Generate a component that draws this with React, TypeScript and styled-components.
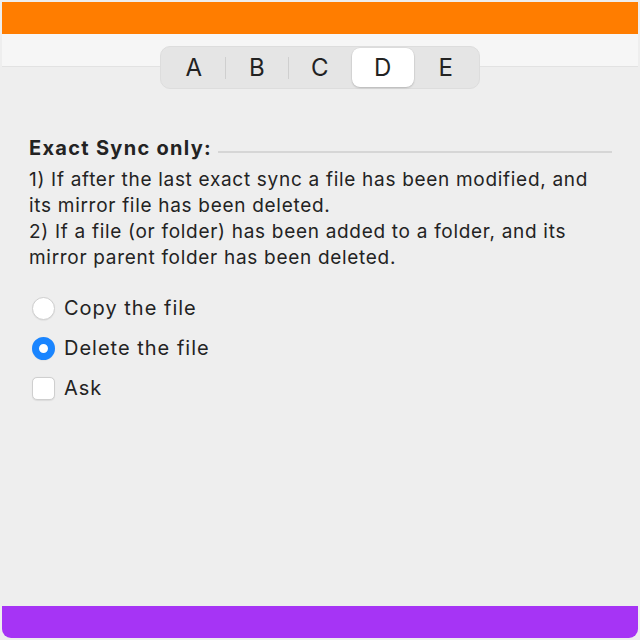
import React, { useState } from 'react'
import styled, { createGlobalStyle } from 'styled-components'

const GlobalStyle = createGlobalStyle`
  html, body {
    margin: 0;
    padding: 0;
    background: #eeeeee;
  }
  body {
    font-family: Inter, 'Noto Sans', sans-serif;
    color: #232323;
  }
`

const tabs = ['A', 'B', 'C', 'D', 'E']

const options = [
  { id: 'copy', label: 'Copy the file', kind: 'radio' },
  { id: 'delete', label: 'Delete the file', kind: 'radio' },
  { id: 'ask', label: 'Ask', kind: 'check' },
]

const App: React.FC = () => {
  const [tab, setTab] = useState(3)
  const [choice, setChoice] = useState('delete')
  const [ask, setAsk] = useState(false)

  return (
    <>
      <GlobalStyle />
      <StyledWindow>
        <TopBar />
        <StyledToolbar>
          <StyledSegments>
            {tabs.map((t, i) => (
              <React.Fragment key={t}>
                {i > 0 && (
                  <StyledDivider faded={i === tab || i - 1 === tab} />
                )}
                <StyledSegment active={i === tab} onClick={() => setTab(i)}>
                  {t}
                </StyledSegment>
              </React.Fragment>
            ))}
          </StyledSegments>
        </StyledToolbar>

        <StyledContent>
          <StyledHeading>
            <StyledHeadingText>Exact Sync only:</StyledHeadingText>
            <StyledRule />
          </StyledHeading>
          <StyledText>
            1) If after the last exact sync a file has been modified, and
            <br />
            its mirror file has been deleted.
            <br />
            2) If a file (or folder) has been added to a folder, and its
            <br />
            mirror parent folder has been deleted.
          </StyledText>

          <StyledOptions>
            {options.map((o) => {
              const checked = o.kind === 'radio' ? choice === o.id : ask
              return (
                <StyledOption
                  key={o.id}
                  onClick={() =>
                    o.kind === 'radio' ? setChoice(o.id) : setAsk(!ask)
                  }
                >
                  {o.kind === 'radio' ? (
                    <StyledRadio checked={checked} />
                  ) : (
                    <StyledCheck checked={checked}>{checked ? '✓' : ''}</StyledCheck>
                  )}
                  {o.label}
                </StyledOption>
              )
            })}
          </StyledOptions>
        </StyledContent>

        <BottomBar />
      </StyledWindow>
    </>
  )
}

const StyledWindow = styled.div`
  margin: 2px;
  width: 636px;
  height: 636px;
  display: flex;
  flex-direction: column;
  background: #eeeeee;
`

const TopBar = styled.div`
  height: 32px;
  background: #ff7d00;
  flex-shrink: 0;
`

const BottomBar = styled.div`
  margin-top: auto;
  height: 32px;
  background: #a634f5;
  border-radius: 0 0 9px 9px;
  flex-shrink: 0;
`

const StyledToolbar = styled.div`
  display: flex;
  justify-content: center;
  padding-top: 12px;
  background: linear-gradient(
    #f6f6f6 0,
    #f6f6f6 32px,
    #e2e2e2 32px,
    #e2e2e2 33px,
    #eeeeee 33px
  );
`

const StyledSegments = styled.div`
  display: flex;
  align-items: center;
  box-sizing: border-box;
  width: 320px;
  height: 43px;
  padding: 0 2px;
  border-radius: 10px;
  background: #e5e5e5;
  border: 1px solid #dddddd;
`

const StyledSegment = styled.div<{ active: boolean }>`
  flex: 1;
  height: 39px;
  display: flex;
  align-items: center;
  justify-content: center;
  font-size: 24px;
  letter-spacing: 0.5px;
  color: #222222;
  border-radius: 8px;
  cursor: default;
  background: ${(p) => (p.active ? '#ffffff' : 'transparent')};
  box-shadow: ${(p) =>
    p.active ? '0 1px 2px rgba(0, 0, 0, 0.18), 0 0 0 0.5px rgba(0,0,0,0.06)' : 'none'};
`

const StyledDivider = styled.div<{ faded: boolean }>`
  width: 1px;
  height: 22px;
  background: ${(p) => (p.faded ? 'transparent' : '#cfcfcf')};
`

const StyledContent = styled.div`
  padding: 46px 27px 0 27px;
`

const StyledHeading = styled.div`
  display: flex;
  align-items: center;
  gap: 6px;
`

const StyledHeadingText = styled.div`
  font-size: 20px;
  font-weight: 700;
  letter-spacing: 1.3px;
  line-height: 26px;
  white-space: nowrap;
`

const StyledRule = styled.div`
  flex: 1;
  height: 2px;
  margin-top: 8px;
  margin-right: -1px;
  background: #d6d6d6;
`

const StyledText = styled.div`
  margin-top: 6px;
  font-size: 19px;
  letter-spacing: 0.7px;
  line-height: 26px;
  color: #232323;
`

const StyledOptions = styled.div`
  margin-top: 23px;
  display: flex;
  flex-direction: column;
  gap: 12px;
`

const StyledOption = styled.label`
  display: flex;
  align-items: center;
  gap: 9px;
  height: 28px;
  font-size: 20px;
  letter-spacing: 1px;
  color: #232323;
  padding-left: 3px;
`

const StyledRadio = styled.span<{ checked: boolean }>`
  box-sizing: border-box;
  width: 23px;
  height: 23px;
  border-radius: 50%;
  flex-shrink: 0;
  background: #ffffff;
  border: ${(p) => (p.checked ? '7px solid #1a85ff' : '1px solid #cfcfcf')};
  box-shadow: 0 0.5px 1px rgba(0, 0, 0, 0.08);
`

const StyledCheck = styled.span<{ checked: boolean }>`
  box-sizing: border-box;
  width: 23px;
  height: 23px;
  border-radius: 5px;
  flex-shrink: 0;
  display: flex;
  align-items: center;
  justify-content: center;
  font-size: 16px;
  color: #ffffff;
  background: ${(p) => (p.checked ? '#1a85ff' : '#ffffff')};
  border: 1px solid ${(p) => (p.checked ? '#1a85ff' : '#cfcfcf')};
  box-shadow: 0 0.5px 1px rgba(0, 0, 0, 0.08);
`

export default App
